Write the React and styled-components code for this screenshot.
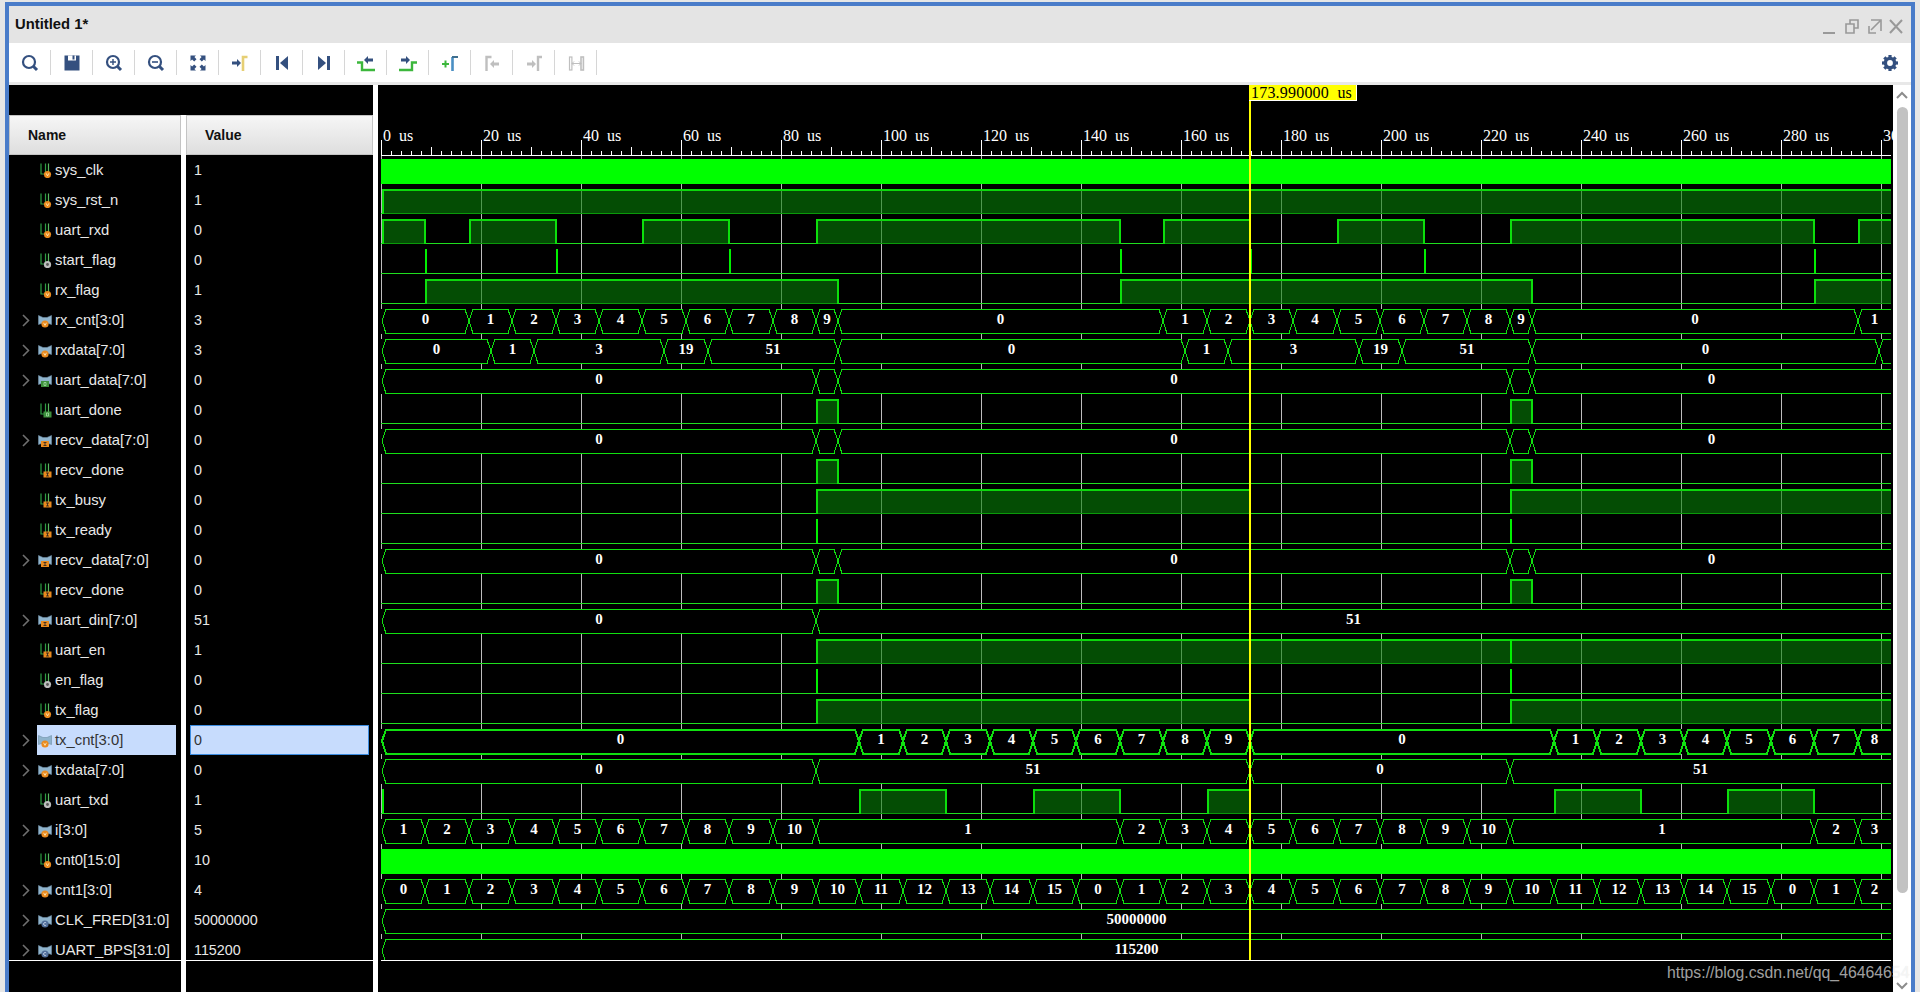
import React from 'react';
import styled, { createGlobalStyle } from 'styled-components';

const GlobalStyle = createGlobalStyle`
    html, body {
        margin: 0;
        padding: 0;
        background: #e6e6e6;
        overflow: hidden;
    }
`;

const NAVY = '#34507f';
const GREEN = '#3cb73c';
const GRAY = '#bfbfbf';

const Page = styled.div`
    position: relative;
    box-sizing: border-box;
    width: 1920px;
    height: 992px;
    padding: 2px 5px 0;
    overflow: hidden;
    background: #e6e6e6;
    font-family: "Liberation Sans", Arial, sans-serif;
`;

const Frame = styled.div`
    display: flex;
    flex-direction: column;
    box-sizing: border-box;
    height: 990px;
    border: 4px solid #4a7cc9;
    border-bottom: none;
    background: #fff;
`;

const TitleBar = styled.div`
    display: flex;
    align-items: center;
    justify-content: space-between;
    flex: none;
    height: 37px;
    padding: 0 4px 2px 6px;
    box-sizing: border-box;
    background: #e4e4e4;
`;

const Title = styled.span`
    font-size: 14.8px;
    font-weight: bold;
    color: #111;
`;

const WindowControls = styled.div`
    display: flex;
    margin-top: 6px;
`;

const WindowButton = styled.svg`
    display: block;
    width: 22px;
    height: 22px;
    fill: none;
    stroke: #999;
    stroke-width: 1.6;
`;

const Toolbar = styled.div`
    display: flex;
    align-items: center;
    flex: none;
    height: 42px;
    box-sizing: border-box;
    background: #fff;
    border-bottom: 3px solid #e8e8e8;
`;

const ToolButton = styled.div`
    display: flex;
    align-items: center;
    justify-content: center;
    width: 41px;
    height: 25px;
    border-right: 1px solid #d6d6d6;
`;

const ToolSvg = styled.svg`
    display: block;
    width: 24px;
    height: 24px;
`;

const Spacer = styled.div`
    flex: 1;
`;

const GearSlot = styled.div`
    display: flex;
    margin-right: 9px;
`;

const Body = styled.div`
    display: flex;
    flex: 1;
    min-height: 0;
    background: #fff;
`;

const LeftPane = styled.div`
    display: flex;
    flex-direction: column;
    flex: none;
    width: 364px;
`;

const TopBand = styled.div`
    flex: none;
    height: 30px;
    background: #000;
`;

const Columns = styled.div`
    display: flex;
    flex: 1;
    gap: 5px;
    min-height: 0;
`;

const Column = styled.div`
    display: flex;
    flex-direction: column;
    width: ${(props) => props.$width}px;
    background: #000;
`;

const Header = styled.div`
    display: flex;
    align-items: center;
    flex: none;
    box-sizing: border-box;
    height: 40px;
    padding-left: ${(props) => props.$indent}px;
    border: 1px solid #c4c4c4;
    background: linear-gradient(#f6f6f6, #dedede);
    font-size: 14px;
    font-weight: bold;
    color: #111;
`;

const RowList = styled.div`
    flex: none;
    height: 805px;
    overflow: hidden;
    border-bottom: 1px solid #fff;
`;

const NameRow = styled.div`
    display: flex;
    align-items: center;
    height: 30px;
    padding: 0 5px 0 12px;
`;

const Expander = styled.svg`
    flex: none;
    width: 16px;
    height: 16px;
    fill: none;
    stroke: #6f6f6f;
    stroke-width: 1.6;
    visibility: ${(props) => (props.$shown ? 'visible' : 'hidden')};
`;

const NameCell = styled.div`
    display: flex;
    align-items: center;
    flex: 1;
    gap: 3px;
    height: 30px;
    padding-left: 1px;
    background: ${(props) => (props.$selected ? '#c7dcfd' : 'transparent')};
    color: ${(props) => (props.$selected ? '#333' : '#e8e8e8')};
    font-size: 14.8px;
    white-space: nowrap;
`;

const SignalSvg = styled.svg`
    display: block;
    flex: none;
    width: 14px;
    height: 16px;
`;

const ValueCell = styled.div`
    display: flex;
    align-items: center;
    box-sizing: border-box;
    height: 30px;
    margin: 0 4px;
    padding-left: ${(props) => (props.$selected ? '3px' : '4px')};
    border: ${(props) => (props.$selected ? '1px solid #3c8ce0' : 'none')};
    background: ${(props) => (props.$selected ? '#c7dcfd' : 'transparent')};
    color: ${(props) => (props.$selected ? '#333' : '#e8e8e8')};
    font-size: 14.3px;
`;

const Sash = styled.div`
    flex: none;
    width: 5px;
    background: #fff;
`;

const WavePane = styled.div`
    flex: none;
    width: 1515px;
    background: #000;
`;

const WaveSvg = styled.svg`
    display: block;
`;

const AxisLabel = styled.text`
    font-family: "Liberation Serif", serif;
    font-size: 16px;
    fill: #fff;
`;

const CursorLabel = styled.text`
    font-family: "Liberation Serif", serif;
    font-size: 16px;
    letter-spacing: 0.2px;
    fill: #000;
`;

const BusLabel = styled.text`
    font-family: "Liberation Serif", serif;
    font-size: 15px;
    font-weight: bold;
    fill: #fff;
    text-anchor: middle;
`;

const Scrollbar = styled.div`
    display: flex;
    flex-direction: column;
    align-items: center;
    flex: none;
    width: 18px;
    background: #fff;
`;

const ScrollArrow = styled.svg`
    display: block;
    flex: none;
    width: 14px;
    height: ${(props) => props.$height}px;
    margin-top: ${(props) => props.$gap}px;
    fill: none;
    stroke: #8c8c8c;
    stroke-width: 2;
`;

const ScrollThumb = styled.div`
    flex: none;
    width: 11px;
    height: 786px;
    border-radius: 6px;
    background: #c2c2c2;
`;

const Watermark = styled.div`
    position: absolute;
    left: 1667px;
    top: 964px;
    font-size: 15.8px;
    white-space: nowrap;
    color: rgba(255, 255, 255, 0.64);
    text-shadow: 0 0 1px rgba(0, 0, 0, 0.12);
`;

// waveform timing: one bit is 8.68 us, 5 px per us
const XR = 1891;
const END = 99;
const CURSOR = 1249;
const at = (u) => Math.round(382 + 43.4 * u);
const atUs = (t) => 381 + 5 * t;

const seq = (labels) => labels.map(([from, to, label]) => ({ from, to, label }));

const countSegs = (from, count, start = 0, mod = 1000) => {
    const out = [];
    for (let n = 0; n < count; n += 1) {
        out.push([from + n, from + n + 1, String((start + n) % mod)]);
    }
    return out;
};

const RECV = seq([[0, 10, '0'], [10, 10.5, null], [10.5, 26, '0'], [26, 26.5, null], [26.5, END, '0']]);
const DONE = [[10, 10.5], [26, 26.5]];

const SIGNALS = [
    { name: 'sys_clk', value: '1', badge: 'v', solid: true },
    { name: 'sys_rst_n', value: '1', badge: 'v', highs: [[0, END]] },
    { name: 'uart_rxd', value: '0', badge: 'v', highs: [[0, 1], [2, 4], [6, 8], [10, 17], [18, 20], [22, 24], [26, 33], [34, END]] },
    { name: 'start_flag', value: '0', badge: 'o', pulses: [1, 4, 8, 17, 20, 24, 33] },
    { name: 'rx_flag', value: '1', badge: 'v', highs: [[1, 10.5], [17, 26.5], [33, END]] },
    {
        name: 'rx_cnt[3:0]', value: '3', badge: 'v',
        segs: seq([[0, 2, '0'], ...countSegs(2, 8, 1), [10, 10.5, '9'], [10.5, 18, '0'], ...countSegs(18, 8, 1), [26, 26.5, '9'], [26.5, 34, '0'], [34, END, '1']]),
    },
    {
        name: 'rxdata[7:0]', value: '3', badge: 'v',
        segs: seq([[0, 2.5, '0'], [2.5, 3.5, '1'], [3.5, 6.5, '3'], [6.5, 7.5, '19'], [7.5, 10.5, '51'], [10.5, 18.5, '0'], [18.5, 19.5, '1'], [19.5, 22.5, '3'], [22.5, 23.5, '19'], [23.5, 26.5, '51'], [26.5, 34.5, '0'], [34.5, END, null]]),
    },
    { name: 'uart_data[7:0]', value: '0', badge: 'd', segs: RECV },
    { name: 'uart_done', value: '0', badge: 'd', highs: DONE },
    { name: 'recv_data[7:0]', value: '0', badge: 'i', segs: RECV },
    { name: 'recv_done', value: '0', badge: 'i', highs: DONE },
    { name: 'tx_busy', value: '0', badge: 'i', highs: [[10, 20], [26, END]] },
    { name: 'tx_ready', value: '0', badge: 'i', pulses: [10, 26] },
    { name: 'recv_data[7:0]', value: '0', badge: 'i', segs: RECV },
    { name: 'recv_done', value: '0', badge: 'i', highs: DONE },
    { name: 'uart_din[7:0]', value: '51', badge: 'i', segs: seq([[0, 10, '0'], [10, END, '51']]) },
    { name: 'uart_en', value: '1', badge: 'i', highs: [[10, END]], pulses: [26] },
    { name: 'en_flag', value: '0', badge: 'o', pulses: [10, 26] },
    { name: 'tx_flag', value: '0', badge: 'v', highs: [[10, 20], [26, END]] },
    {
        name: 'tx_cnt[3:0]', value: '0', badge: 'v', selected: true,
        segs: seq([[0, 11, '0'], ...countSegs(11, 9, 1), [20, 27, '0'], ...countSegs(27, 8, 1), [35, END, null]]),
    },
    { name: 'txdata[7:0]', value: '0', badge: 'v', segs: seq([[0, 10, '0'], [10, 20, '51'], [20, 26, '0'], [26, END, '51']]) },
    { name: 'uart_txd', value: '1', badge: 'o', highs: [[11, 13], [15, 17], [19, 20], [27, 29], [31, 33]], pulses: [0] },
    {
        name: 'i[3:0]', value: '5', badge: 'v',
        segs: seq([...countSegs(0, 10, 1), [10, 17, '1'], ...countSegs(17, 3, 2), ...countSegs(20, 6, 5), [26, 33, '1'], [33, 34, '2'], [34, END, '3']]),
    },
    { name: 'cnt0[15:0]', value: '10', badge: 'v', solid: true },
    { name: 'cnt1[3:0]', value: '4', badge: 'v', segs: seq([...countSegs(0, 34, 0, 16), [34, END, '2']]) },
    { name: 'CLK_FRED[31:0]', value: '50000000', badge: 'c', segs: seq([[0, END, '50000000']]) },
    { name: 'UART_BPS[31:0]', value: '115200', badge: 'c', segs: seq([[0, END, '115200']]) },
];

const BADGE = {
    v: { fill: '#ea8a1e', mark: 'v' },
    o: { fill: '#bdbdbd', mark: 'o' },
    d: { fill: '#3d8f3d', mark: 'd' },
    i: { fill: '#ea8a1e', mark: 'i' },
    c: { fill: '#4f6d99', mark: 'c' },
};

const Badge = ({ kind }) => {
    const { fill, mark } = BADGE[kind];
    if (mark === 'd' || mark === 'i') {
        return (
            <g>
                <rect x="3" y="9" width="8" height="6" fill={fill} />
                <path d={mark === 'i' ? 'M5.5 10.5h3M7 10.5v3M5.5 13.5h3' : 'M6 10.5h2v3H6z'} stroke={mark === 'i' ? '#222' : '#a5e0a5'} strokeWidth="0.8" fill="none" />
            </g>
        );
    }
    return (
        <g>
            <circle cx="7" cy="12" r="3.6" fill={fill} />
            {mark === 'v' && <path d="M5.6 10.8L7 13.4l1.4-2.6" stroke="#fff2c8" strokeWidth="0.8" fill="none" />}
            {mark === 'o' && <circle cx="7" cy="12" r="1.4" fill="#555" />}
            {mark === 'c' && <path d="M8.2 11a1.5 1.5 0 1 0 0 2" stroke="#d7e3f5" strokeWidth="0.8" fill="none" />}
        </g>
    );
};

const SignalIcon = ({ bus, badge }) => (
    <SignalSvg viewBox="0 0 14 16">
        {bus ? (
            <path d="M0.5 3.5L5 5.5h4l4.5-2v9L9 11H5L0.5 12.5z" fill="#8fb3cc" stroke="#6f8ea6" strokeWidth="0.6" />
        ) : (
            <g fill="none" strokeWidth="1.2">
                <path d="M3 1.5v10.5h3" stroke="#2f9e44" />
                <path d="M7.5 12V1.5" stroke="#2f9e44" />
                <path d="M10.5 1.5V10" stroke="#57b85f" />
            </g>
        )}
        <g transform={bus ? undefined : 'translate(2.5 0.5)'}>
            <Badge kind={badge} />
        </g>
    </SignalSvg>
);

const ChevronRight = ({ shown }) => (
    <Expander $shown={shown} viewBox="0 0 16 16">
        <path d="M2 3L7.5 8.5 2 14" />
    </Expander>
);

const ArrowLeft = ({ x, y, fill }) => (
    <path transform={`translate(${x} ${y})`} d="M0 4L4 0v2.5h5v3H4V8z" fill={fill} />
);

const ArrowRight = ({ x, y, fill }) => (
    <path transform={`translate(${x} ${y})`} d="M0 2.5h5V0l4 4-4 4V5.5H0z" fill={fill} />
);

const Magnifier = ({ children }) => (
    <g fill="none" stroke={NAVY}>
        <circle cx="11" cy="11" r="6" strokeWidth="2.2" />
        <path d="M15.5 15.5L19 19" strokeWidth="3" />
        {children}
    </g>
);

const TOOLS = [
    <Magnifier key="find" />,
    <g key="save">
        <rect x="4.5" y="4.5" width="15" height="15" fill={NAVY} />
        <rect x="8" y="4.5" width="8" height="5" fill="#fff" />
        <rect x="12.5" y="4.5" width="2" height="4" fill={NAVY} />
    </g>,
    <Magnifier key="in"><path d="M8 11h6M11 8v6" strokeWidth="1.4" /></Magnifier>,
    <Magnifier key="out"><path d="M8 11h6" strokeWidth="1.6" /></Magnifier>,
    <g key="fit" fill={NAVY}>
        {[0, 90, 180, 270].map((deg) => (
            <path key={deg} transform={`rotate(${deg} 12 12)`} d="M4.5 4.5h5.5L8.4 6.1l2.1 2.1-2.3 2.3-2.1-2.1-1.6 1.6z" />
        ))}
    </g>,
    <g key="cursor">
        <ArrowRight x={4} y={8} fill={NAVY} />
        <path d="M15 20V6h4.5" fill="none" stroke="#e6cf74" strokeWidth="2.6" />
    </g>,
    <g key="first" fill={NAVY}>
        <rect x="6" y="5" width="3" height="14" />
        <path d="M18 5v14l-8-7z" />
    </g>,
    <g key="last" fill={NAVY}>
        <rect x="15" y="5" width="3" height="14" />
        <path d="M6 5v14l8-7z" />
    </g>,
    <g key="prev">
        <path d="M3 11.5h5v7.5h13" fill="none" stroke={GREEN} strokeWidth="2.4" />
        <ArrowLeft x={10} y={5} fill={NAVY} />
    </g>,
    <g key="next">
        <path d="M3 19h13v-7.5h5" fill="none" stroke={GREEN} strokeWidth="2.4" />
        <ArrowRight x={5} y={5} fill={NAVY} />
    </g>,
    <g key="add">
        <path d="M4 13h7M7.5 9.5v7" fill="none" stroke={GREEN} strokeWidth="2" />
        <path d="M14.5 20V6" fill="none" stroke="#4a8fc4" strokeWidth="2.6" />
        <path d="M14 6h6" fill="none" stroke="#3f6f8f" strokeWidth="2" />
    </g>,
    <g key="prevm">
        <path d="M6.5 20V6h5" fill="none" stroke={GRAY} strokeWidth="2.4" />
        <ArrowLeft x={10} y={9} fill={GRAY} />
    </g>,
    <g key="nextm">
        <ArrowRight x={5} y={9} fill={GRAY} />
        <path d="M16 20V6h4" fill="none" stroke={GRAY} strokeWidth="2.4" />
    </g>,
    <g key="swap" fill="none" stroke={GRAY}>
        <rect x="5.5" y="6" width="2.4" height="13" strokeWidth="1.2" />
        <rect x="17" y="6" width="2.4" height="13" strokeWidth="1.6" />
        <path d="M8 12.5h9M10 10.5l-2 2 2 2M15 10.5l2 2-2 2" strokeWidth="1" />
    </g>,
];

const Gear = () => (
    <ToolSvg viewBox="0 0 24 24">
        <circle cx="12" cy="12" r="4.6" fill="none" stroke={NAVY} strokeWidth="3.4" />
        {[0, 45, 90, 135, 180, 225, 270, 315].map((deg) => (
            <rect key={deg} x="10.4" y="4" width="3.2" height="4" fill={NAVY} transform={`rotate(${deg} 12 12)`} />
        ))}
    </ToolSvg>
);

const Axis = () => {
    const ticks = [];
    for (let t = 0; t <= 300; t += 2) {
        const x = atUs(t);
        let top = 151;
        if (t % 20 === 0) top = 140;
        else if (t % 10 === 0) top = 147;
        ticks.push(<rect key={t} x={x} y={top} width="1" height={155 - top} fill="#fff" />);
    }
    const labels = [];
    for (let t = 0; t <= 300; t += 20) {
        labels.push(<AxisLabel key={t} x={atUs(t) + 2} y="141">{`${t}\u00a0\u00a0us`}</AxisLabel>);
    }
    return (
        <g>
            {labels}
            {ticks}
            <rect x="381" y="155" width={XR - 381} height="1" fill="#fff" />
        </g>
    );
};

const GridLines = () => {
    const lines = [];
    for (let t = 0; t <= 300; t += 20) {
        lines.push(<rect key={t} x={atUs(t)} y="156" width="1" height="804" fill="#bdbdbd" />);
    }
    return <g>{lines}</g>;
};

const LogicTrace = ({ signal, top }) => {
    const bottom = top + 24;
    return (
        <g>
            <rect x="381" y={bottom} width={XR - 381} height="1" fill="#1fdf1f" />
            {(signal.highs || []).map(([from, to]) => {
                const a = at(from);
                const b = Math.min(at(to), XR + 4);
                return (
                    <g key={from}>
                        <rect x={a} y={top} width={b - a} height={bottom - top} fill="#068006" fillOpacity="0.6" />
                        <rect x={a} y={bottom} width={b - a} height="1" fill="#0a9a0a" />
                        <rect x={a} y={top} width={b - a} height="2" fill="#0cd80c" />
                        <rect x={a} y={top} width="2" height={bottom - top + 1} fill="#0ce00c" />
                        <rect x={b - 1} y={top} width="2" height={bottom - top + 1} fill="#0ce00c" />
                    </g>
                );
            })}
            {(signal.pulses || []).map((u) => (
                <rect key={u} x={at(u)} y={top} width="2" height={bottom - top} fill="#00f000" />
            ))}
        </g>
    );
};

const BusTrace = ({ signal, top }) => {
    const bottom = top + 24;
    const mid = top + 12;
    const stroke = signal.selected ? 2 : 1;
    return (
        <g>
            <rect x="381" y={top} width={XR - 381} height={bottom - top + 1} fill="#000" />
            {signal.segs.map((seg) => {
                const a = at(seg.from);
                const b = seg.to >= END ? XR + 20 : at(seg.to);
                const points = `${a},${mid} ${a + 4},${top + 0.5} ${b - 4},${top + 0.5} ${b},${mid} ${b - 4},${bottom + 0.5} ${a + 4},${bottom + 0.5}`;
                const center = (a + Math.min(b, XR)) / 2;
                return (
                    <g key={seg.from}>
                        <polygon points={points} fill="none" stroke="#10e010" strokeWidth={stroke} />
                        {seg.label && <BusLabel x={center} y={top + 15}>{seg.label}</BusLabel>}
                    </g>
                );
            })}
        </g>
    );
};

const Waveform = () => (
    <WaveSvg width="1515" height="876" viewBox="378 85 1515 876" shapeRendering="crispEdges">
        <defs>
            <clipPath id="traces">
                <rect x="378" y="156" width={XR - 378} height="804" />
            </clipPath>
        </defs>
        <Axis />
        <g clipPath="url(#traces)">
            <GridLines />
            {SIGNALS.map((signal, i) => {
                const top = 159 + 30 * i;
                if (signal.solid) {
                    return <rect key={i} x="381" y={top} width={XR - 381} height="25" fill="#00ff00" />;
                }
                return signal.segs
                    ? <BusTrace key={i} signal={signal} top={top} />
                    : <LogicTrace key={i} signal={signal} top={top} />;
            })}
        </g>
        <rect x="381" y="960" width={XR - 381} height="1" fill="#fff" />
        <rect x={CURSOR} y="85" width="2" height="875" fill="#ffff00" />
        <rect x={CURSOR} y="85" width="108" height="16" fill="#fff" />
        <rect x={CURSOR} y="85" width="107" height="15" fill="#ffff00" />
        <CursorLabel x={CURSOR + 2} y="98">{'173.990000\u00a0\u00a0us'}</CursorLabel>
    </WaveSvg>
);

const App = () => (
    <Page>
        <GlobalStyle />
        <Frame>
            <TitleBar>
                <Title>Untitled 1*</Title>
                <WindowControls>
                    <WindowButton viewBox="0 0 22 22">
                        <path d="M4 17h12" strokeWidth="2" />
                    </WindowButton>
                    <WindowButton viewBox="0 0 22 22">
                        <path d="M9 8V4h8v8h-4M5 8h8v9H5z" />
                    </WindowButton>
                    <WindowButton viewBox="0 0 22 22">
                        <path d="M8 4h10v11M17 5l-9 9M6 10v7h7" />
                    </WindowButton>
                    <WindowButton viewBox="0 0 22 22">
                        <path d="M5 4l12 13M17 4L5 17" strokeWidth="2" />
                    </WindowButton>
                </WindowControls>
            </TitleBar>
            <Toolbar>
                {TOOLS.map((tool) => (
                    <ToolButton key={tool.key}>
                        <ToolSvg viewBox="0 0 24 24">{tool}</ToolSvg>
                    </ToolButton>
                ))}
                <Spacer />
                <GearSlot><Gear /></GearSlot>
            </Toolbar>
            <Body>
                <LeftPane>
                    <TopBand />
                    <Columns>
                        <Column $width={172}>
                            <Header $indent={18}>Name</Header>
                            <RowList>
                                {SIGNALS.map((signal, i) => (
                                    <NameRow key={i}>
                                        <ChevronRight shown={Boolean(signal.segs)} />
                                        <NameCell $selected={signal.selected}>
                                            <SignalIcon bus={Boolean(signal.segs)} badge={signal.badge} />
                                            {signal.name}
                                        </NameCell>
                                    </NameRow>
                                ))}
                            </RowList>
                        </Column>
                        <Column $width={187}>
                            <Header $indent={18}>Value</Header>
                            <RowList>
                                {SIGNALS.map((signal, i) => (
                                    <ValueCell key={i} $selected={signal.selected}>{signal.value}</ValueCell>
                                ))}
                            </RowList>
                        </Column>
                    </Columns>
                </LeftPane>
                <Sash />
                <WavePane>
                    <Waveform />
                </WavePane>
                <Scrollbar>
                    <ScrollArrow $height={22} $gap={0} viewBox="0 0 14 22">
                        <path d="M2 13l5-5 5 5" />
                    </ScrollArrow>
                    <ScrollThumb />
                    <ScrollArrow $height={14} $gap={86} viewBox="0 0 14 14">
                        <path d="M2 4l5 5 5-5" />
                    </ScrollArrow>
                </Scrollbar>
            </Body>
        </Frame>
        <Watermark>https://blog.csdn.net/qq_46464654</Watermark>
    </Page>
);

export default App;
